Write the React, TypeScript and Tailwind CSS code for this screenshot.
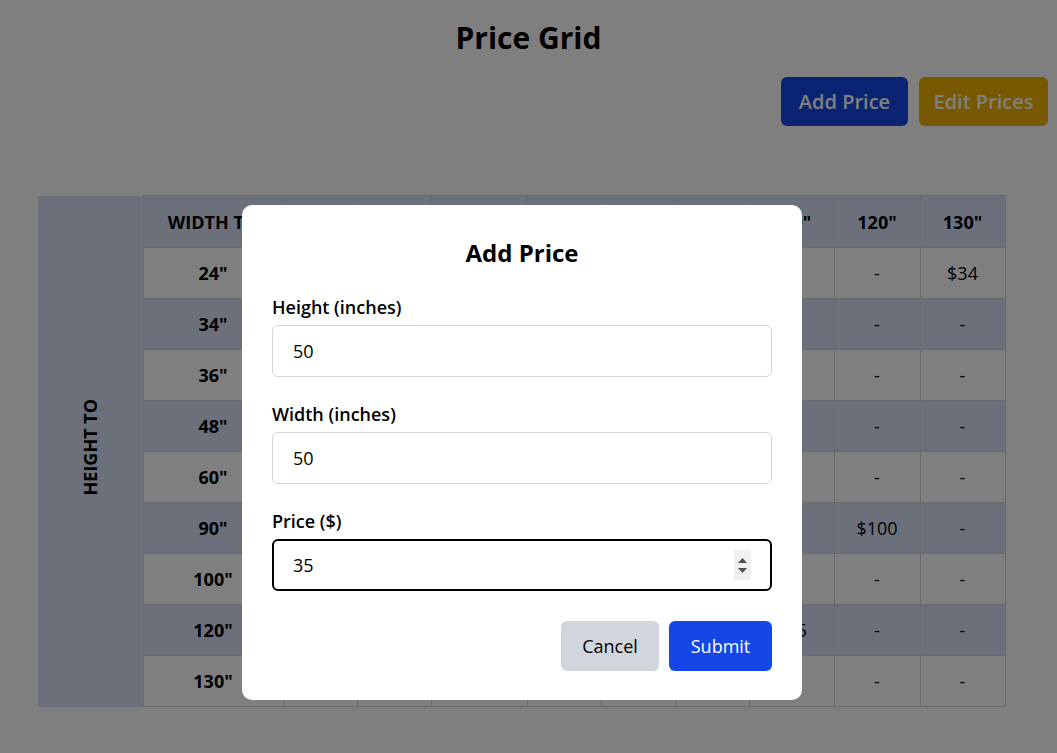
import React from "react";

const widths = ['24"', '36"', '48"', '60"', '72"', '90"', '100"', '120"', '130"'];

const rows: { label: string; cells: string[] }[] = [
  { label: '24"', cells: ["-", "-", "-", "-", "-", "-", "-", "-", "$34"] },
  { label: '34"', cells: ["-", "-", "-", "-", "-", "-", "-", "-", "-"] },
  { label: '36"', cells: ["-", "-", "-", "-", "-", "-", "-", "-", "-"] },
  { label: '48"', cells: ["-", "-", "-", "-", "-", "-", "-", "-", "-"] },
  { label: '60"', cells: ["-", "-", "-", "-", "-", "-", "-", "-", "-"] },
  { label: '90"', cells: ["-", "-", "-", "-", "-", "-", "-", "$100", "-"] },
  { label: '100"', cells: ["-", "-", "-", "-", "-", "-", "-", "-", "-"] },
  { label: '120"', cells: ["-", "-", "-", "-", "-", "-", "$45", "-", "-"] },
  { label: '130"', cells: ["-", "-", "-", "-", "-", "-", "-", "-", "-"] },
];

const colWidths = ["w-[74px]", "w-[74px]", "w-[96px]", "w-[74px]", "w-[74px]", "w-[74px]", "w-[85px]", "w-[86px]", "w-[85px]"];

const Field = ({ label, value, focused }: { label: string; value: string; focused?: boolean }) => (
  <div className="flex flex-col">
    <label className="mb-1 text-lg font-semibold leading-7">{label}</label>
    <div className="relative">
      <input
        type="text"
        defaultValue={value}
        className={
          focused
            ? "h-[52px] w-full rounded-md border-2 border-black px-[19px] text-lg outline-none"
            : "h-[52px] w-full rounded-md border border-gray-300 px-5 text-lg outline-none"
        }
      />
      {focused && (
        <div className="absolute right-[21px] top-[11px] flex h-[30px] w-[17px] flex-col items-center justify-center gap-[5px] bg-[#f0f0f0]">
          <svg width="9" height="5" viewBox="0 0 9 5">
            <path d="M4.5 0 L9 5 L0 5 Z" fill="#505050" />
          </svg>
          <svg width="9" height="5" viewBox="0 0 9 5">
            <path d="M0 0 L9 0 L4.5 5 Z" fill="#505050" />
          </svg>
        </div>
      )}
    </div>
  </div>
);

export default function App() {
  return (
    <div className="relative min-h-screen bg-white text-black font-['Open_Sans',_'Noto_Sans',_sans-serif]">
      <h1 className="pt-5 text-center text-3xl font-bold leading-9">Price Grid</h1>

      <div className="mt-[21px] flex justify-end gap-[11px] pr-[9px]">
        <button className="h-[49px] w-[127px] rounded-md bg-blue-700 text-xl font-semibold text-white">Add Price</button>
        <button className="h-[49px] w-[129px] rounded-md bg-yellow-500 text-xl font-semibold text-white">Edit Prices</button>
      </div>

      <div className="mt-[69px] pb-12 pl-[38px]">
        <table className="w-[967px] table-fixed border-collapse text-lg">
          <colgroup>
            <col className="w-[105px]" />
            <col className="w-[140px]" />
            {colWidths.map((w, i) => (
              <col key={i} className={w} />
            ))}
          </colgroup>
          <tbody>
            <tr className="h-[52px] bg-[#d8e0f6]">
              <th rowSpan={10} className="bg-[#d8e0f6] p-0 align-middle">
                <span className="inline-block rotate-180 font-bold [writing-mode:vertical-rl]">HEIGHT TO</span>
              </th>
              <th className="border border-gray-300 font-bold">WIDTH TO</th>
              {widths.map((w) => (
                <th key={w} className="border border-gray-300 font-bold">
                  {w}
                </th>
              ))}
            </tr>
            {rows.map((r, i) => (
              <tr key={r.label} className={i % 2 === 0 ? "h-[51px] bg-white" : "h-[51px] bg-[#d8e0f6]"}>
                <td className="border border-gray-300 text-center font-bold">{r.label}</td>
                {r.cells.map((c, j) => (
                  <td key={j} className="border border-gray-300 text-center">
                    {c}
                  </td>
                ))}
              </tr>
            ))}
          </tbody>
        </table>
      </div>

      <div className="fixed inset-0 flex items-start justify-center bg-black/50 pr-[13px] pt-[205px]">
        <div className="w-[560px] rounded-[10px] bg-white px-[30px] pb-[29px] pt-8">
          <h2 className="mb-6 text-center text-2xl font-bold leading-8">Add Price</h2>
          <div className="flex flex-col gap-[23px]">
            <Field label="Height (inches)" value="50" />
            <Field label="Width (inches)" value="50" />
            <Field label="Price ($)" value="35" focused />
          </div>
          <div className="mt-[30px] flex justify-end gap-[10px]">
            <button className="h-[50px] w-[98px] rounded-md bg-gray-300 text-lg">Cancel</button>
            <button className="h-[50px] w-[103px] rounded-md bg-blue-700 text-lg text-white">Submit</button>
          </div>
        </div>
      </div>
    </div>
  );
}
